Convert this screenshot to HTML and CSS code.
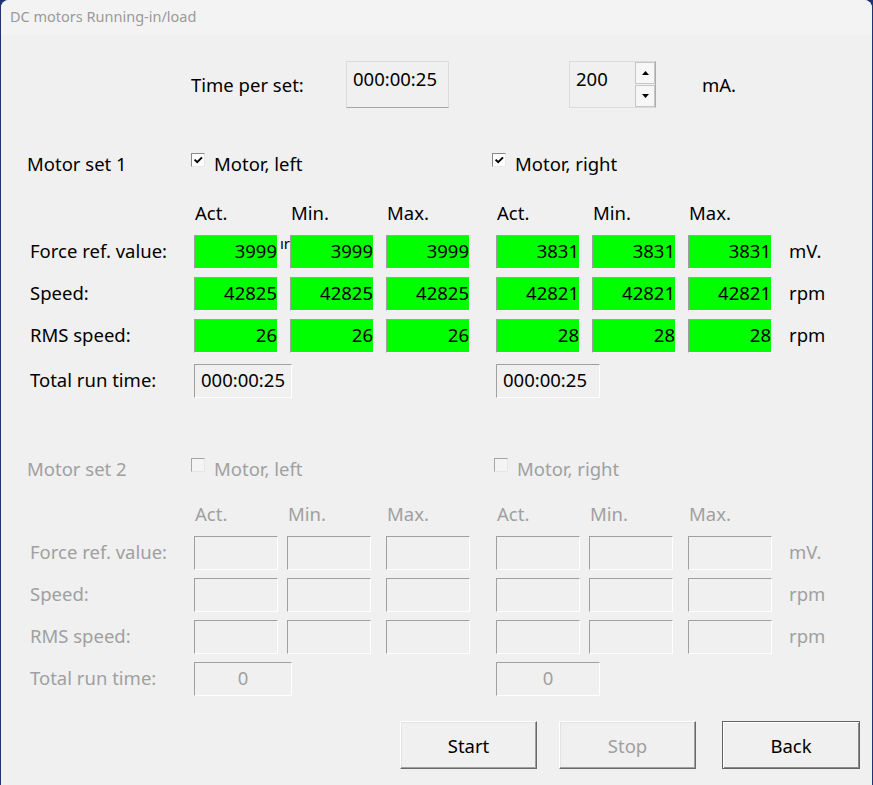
FILE: index.html
```html
<!DOCTYPE html>
<html lang="en">
<head>
    <meta charset="UTF-8">
    <meta name="viewport" content="width=device-width, initial-scale=1.0">
    <title>DC motors Running-in/load</title>
    <link rel="stylesheet" href="styles.css">
</head>
<body>

<div class="window">
    <div class="titlebar">DC motors Running-in/load</div>

    <div class="client">

        <!-- Time per set and current -->
        <div class="top-row">
            <span class="top-label">Time per set:</span>
            <div class="time-box">000:00:25</div>
            <div class="spin">
                <span class="spin-value">200</span>
                <div class="spin-btns">
                    <span class="spin-btn">
                        <svg width="7" height="4" viewBox="0 0 7 4"><polygon points="0,4 3.5,0 7,4" fill="#000"/></svg>
                    </span>
                    <span class="spin-btn">
                        <svg width="7" height="4" viewBox="0 0 7 4"><polygon points="0,0 3.5,4 7,0" fill="#000"/></svg>
                    </span>
                </div>
            </div>
            <span class="unit-ma">mA.</span>
        </div>

        <!-- Motor set 1 -->
        <div class="set set-1">
            <div class="row row-title">
                <span class="set-name">Motor set 1</span>
                <label class="check">
                    <span class="check-box">
                        <svg width="12" height="12" viewBox="0 0 12 12"><path d="M2.6 5.6 L5.2 8.2 L10 3.4" stroke="#000" stroke-width="2" fill="none"/></svg>
                    </span>
                    Motor, left
                </label>
                <label class="check right">
                    <span class="check-box">
                        <svg width="12" height="12" viewBox="0 0 12 12"><path d="M2.6 5.6 L5.2 8.2 L10 3.4" stroke="#000" stroke-width="2" fill="none"/></svg>
                    </span>
                    Motor, right
                </label>
            </div>

            <div class="row row-heads">
                <span class="head first">Act.</span>
                <span class="head c-min">Min.</span>
                <span class="head">Max.</span>
                <span class="head split">Act.</span>
                <span class="head c-min">Min.</span>
                <span class="head">Max.</span>
            </div>

            <div class="row row-vals">
                <span class="label">Force ref. value:</span>
                <span class="val ok">3999<span class="stray">ır</span></span>
                <span class="val ok">3999</span>
                <span class="val ok">3999</span>
                <span class="val ok split">3831</span>
                <span class="val ok">3831</span>
                <span class="val ok">3831</span>
                <span class="unit">mV.</span>
            </div>

            <div class="row row-vals">
                <span class="label">Speed:</span>
                <span class="val ok">42825</span>
                <span class="val ok">42825</span>
                <span class="val ok">42825</span>
                <span class="val ok split">42821</span>
                <span class="val ok">42821</span>
                <span class="val ok">42821</span>
                <span class="unit">rpm</span>
            </div>

            <div class="row row-vals">
                <span class="label">RMS speed:</span>
                <span class="val ok">26</span>
                <span class="val ok">26</span>
                <span class="val ok">26</span>
                <span class="val ok split">28</span>
                <span class="val ok">28</span>
                <span class="val ok">28</span>
                <span class="unit">rpm</span>
            </div>

            <div class="row row-total">
                <span class="label">Total run time:</span>
                <span class="run-time">000:00:25</span>
                <span class="run-time right">000:00:25</span>
            </div>
        </div>

        <!-- Motor set 2 (not available) -->
        <div class="set set-2 disabled">
            <div class="row row-title">
                <span class="set-name">Motor set 2</span>
                <label class="check">
                    <span class="check-box"></span>
                    Motor, left
                </label>
                <label class="check right">
                    <span class="check-box"></span>
                    Motor, right
                </label>
            </div>

            <div class="row row-heads">
                <span class="head first">Act.</span>
                <span class="head c-min">Min.</span>
                <span class="head">Max.</span>
                <span class="head split">Act.</span>
                <span class="head c-min">Min.</span>
                <span class="head">Max.</span>
            </div>

            <div class="row row-vals">
                <span class="label">Force ref. value:</span>
                <span class="val"></span>
                <span class="val c-min"></span>
                <span class="val"></span>
                <span class="val split"></span>
                <span class="val c-min"></span>
                <span class="val"></span>
                <span class="unit">mV.</span>
            </div>

            <div class="row row-vals">
                <span class="label">Speed:</span>
                <span class="val"></span>
                <span class="val c-min"></span>
                <span class="val"></span>
                <span class="val split"></span>
                <span class="val c-min"></span>
                <span class="val"></span>
                <span class="unit">rpm</span>
            </div>

            <div class="row row-vals">
                <span class="label">RMS speed:</span>
                <span class="val"></span>
                <span class="val c-min"></span>
                <span class="val"></span>
                <span class="val split"></span>
                <span class="val c-min"></span>
                <span class="val"></span>
                <span class="unit">rpm</span>
            </div>

            <div class="row row-total">
                <span class="label">Total run time:</span>
                <span class="run-time">0</span>
                <span class="run-time right">0</span>
            </div>
        </div>

        <!-- Bottom buttons -->
        <div class="buttons">
            <button class="btn">Start</button>
            <button class="btn" disabled>Stop</button>
            <button class="btn btn-back">Back</button>
        </div>

    </div>
</div>

</body>
</html>
```

FILE: styles.css
```css
html, body {
    margin: 0;
    background-color: #1e3470;
}

body {
    font-family: "Noto Sans", "Open Sans", sans-serif;
    font-size: 18.5px;
    line-height: 25px;
    color: #000;
}

.window {
    margin-left: 1px;
    width: 871px;
    height: 785px;
    background-color: #f0f0f0;
    border-radius: 8px 8px 0 0;
    overflow: hidden;
}

.titlebar {
    height: 35px;
    line-height: 33px;
    padding-left: 9px;
    background-color: #f3f3f3;
    color: #9a9a9a;
    font-size: 14.5px;
}

.client {
    padding: 26px 0 0 26px;
}

/* Time per set / current row */
.top-row {
    display: flex;
    align-items: center;
    height: 47px;
    margin-left: 164px;
}

.top-label {
    width: 155px;
}

.time-box {
    box-sizing: border-box;
    width: 103px;
    height: 47px;
    padding: 4px 0 0 6px;
    border: 1px solid #dcdcdc;
    border-bottom-color: #a6a6a6;
}

.spin {
    display: flex;
    box-sizing: border-box;
    width: 87px;
    height: 47px;
    margin-left: 120px;
    border: 1px solid #dcdcdc;
    border-right-color: #acacac;
}

.spin-value {
    flex: 1;
    padding: 4px 0 0 6px;
}

.spin-btns {
    display: flex;
    flex-direction: column;
    gap: 1px;
    width: 20px;
}

.spin-btn {
    flex: 1;
    display: flex;
    align-items: center;
    justify-content: center;
    border: 1px solid #c6c6c6;
    background-color: #f7f7f7;
}

.unit-ma {
    margin-left: 46px;
}

/* Motor sets */
.set-1 {
    margin-top: 40px;
}

.set-2 {
    margin-top: 55px;
}

.row {
    display: grid;
    grid-template-columns: 155px 84px 84px 84px 2px 84px 84px 84px auto;
    column-gap: 12px;
    align-items: center;
}

.split {
    grid-column: 6;
}

.row-title {
    height: 30px;
}

.row-heads {
    height: 26px;
    margin-top: 21px;
}

.set-2 .row-heads {
    margin-top: 17px;
}

.row-vals,
.row-total {
    margin-top: 8px;
}

.row-heads + .row-vals {
    margin-top: 10px;
}

.set-1 .row-total {
    margin-top: 11px;
}

.label {
    padding-left: 3px;
    margin-top: -3px;
}

.check {
    grid-column: 2 / span 3;
    display: flex;
    align-items: center;
    gap: 9px;
    margin-left: -3px;
}

.check.right {
    grid-column: 6 / span 3;
    margin-left: -4px;
}

.set-2 .check.right {
    margin-left: -2px;
}

.check-box {
    box-sizing: border-box;
    width: 14px;
    height: 14px;
    margin-bottom: 6px;
    border: 1px solid;
    border-color: #8a8a8a #e8e8e8 #e8e8e8 #8a8a8a;
    background-color: #fff;
}

.check-box svg {
    display: block;
}

.head {
    padding-left: 1px;
}

.head.first {
    grid-column: 2;
}

.val,
.run-time {
    box-sizing: border-box;
    height: 34px;
    line-height: 30px;
    border: 1px solid;
    border-color: #a0a0a0 #fff #fff #a0a0a0;
}

.val {
    position: relative;
    width: 84px;
    text-align: right;
}

.val.ok {
    background-color: #00ff00;
}

/* stray bit of text left in the gap */
.stray {
    position: absolute;
    left: 85px;
    top: -8px;
    font-size: 15px;
}

.run-time {
    grid-column: 2 / span 2;
    width: 98px;
    padding-left: 6px;
}

.run-time.right {
    grid-column: 6 / span 2;
    width: 104px;
}

.unit {
    padding-left: 5px;
    margin-top: -3px;
}

/* greyed out set */
.disabled {
    color: #a0a0a0;
}

.disabled .check-box {
    border-color: #a6a6a6 #e6e6e6 #e6e6e6 #a6a6a6;
    background-color: #f4f4f4;
}

.set-2 .c-min {
    margin-left: -3px;
}

.set-2 .run-time {
    padding-left: 0;
    text-align: center;
}

/* Bottom buttons */
.buttons {
    display: flex;
    justify-content: flex-end;
    gap: 22px;
    margin-top: 25px;
    padding-right: 12px;
}

.btn {
    box-sizing: border-box;
    width: 137px;
    height: 48px;
    padding: 0;
    font: inherit;
    color: #000;
    background-color: #f0f0f0;
    border: 1px solid;
    border-color: #fff #696969 #696969 #fff;
    box-shadow: inset -1px -1px #a0a0a0, inset 1px 1px #e3e3e3;
}

.btn:disabled {
    color: #a0a0a0;
}

.btn-back {
    width: 138px;
    margin-left: 4px;
    border-color: #646464;
    box-shadow: inset 1px 1px #fff, inset -1px -1px #8a8a8a;
}
```
